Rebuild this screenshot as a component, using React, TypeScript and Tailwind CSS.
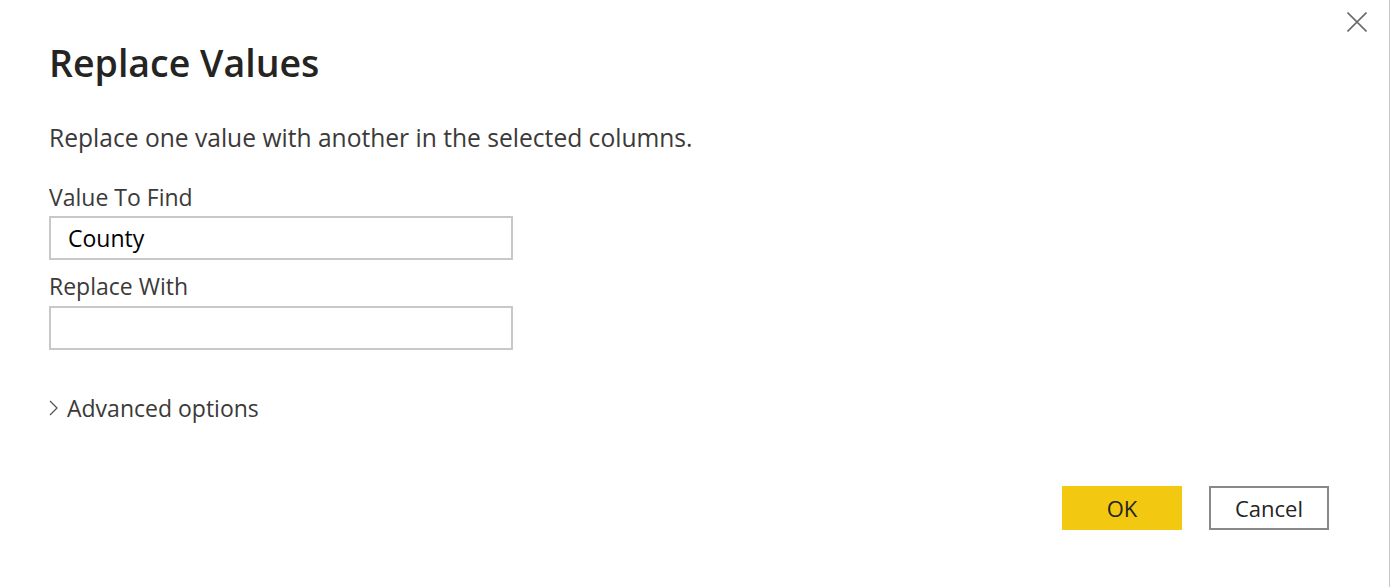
export default function App() {
  return (
    <div className="relative w-[1390px] h-[587px] bg-white border-r border-[#c6c6c6] font-['Open_Sans',sans-serif] text-[#3b3a39]">
      {/* Close */}
      <button
        className="absolute top-[12px] left-[1347px] text-[#6b6b6b]"
        aria-label="Close"
      >
        <svg width="20" height="20" viewBox="0 0 20 20" fill="none" stroke="currentColor" strokeWidth="1.6">
          <path d="M0.5 0.5 L19.5 19.5 M19.5 0.5 L0.5 19.5" />
        </svg>
      </button>

      <div className="px-[49px] pt-[41px] flex flex-col">
        <h1 className="text-[37.5px] leading-[44px] font-semibold text-[#252423]">
          Replace Values
        </h1>

        <p className="mt-[37px] text-[24.6px] leading-[32px]">
          Replace one value with another in the selected columns.
        </p>

        <label className="mt-[27px] text-[23px] leading-[32px]">Value To Find</label>
        <div className="mt-[3px] w-[464px] h-[44px] border-2 border-[#c8c8c8] px-[17px] flex items-center text-[23px] text-black">
          County
        </div>

        <label className="mt-[10px] text-[23px] leading-[32px]">Replace With</label>
        <div className="mt-[4px] w-[464px] h-[44px] border-2 border-[#c8c8c8]" />

        <div className="mt-[42px] flex items-center gap-[9px] text-[23px] leading-[32px]">
          <svg width="9" height="16" viewBox="0 0 9 16" fill="none" stroke="#555" strokeWidth="1.3">
            <path d="M1 1 L8 8 L1 15" />
          </svg>
          <span>Advanced options</span>
        </div>
      </div>

      <div className="absolute left-0 right-0 top-[486px] flex justify-end gap-[27px] pr-[60px]">
        <button className="w-[120px] h-[44px] bg-[#f2c811] text-[22px] text-[#252423]">
          OK
        </button>
        <button className="w-[120px] h-[44px] border-2 border-[#8a8886] bg-white text-[22px] text-[#252423]">
          Cancel
        </button>
      </div>
    </div>
  );
}
